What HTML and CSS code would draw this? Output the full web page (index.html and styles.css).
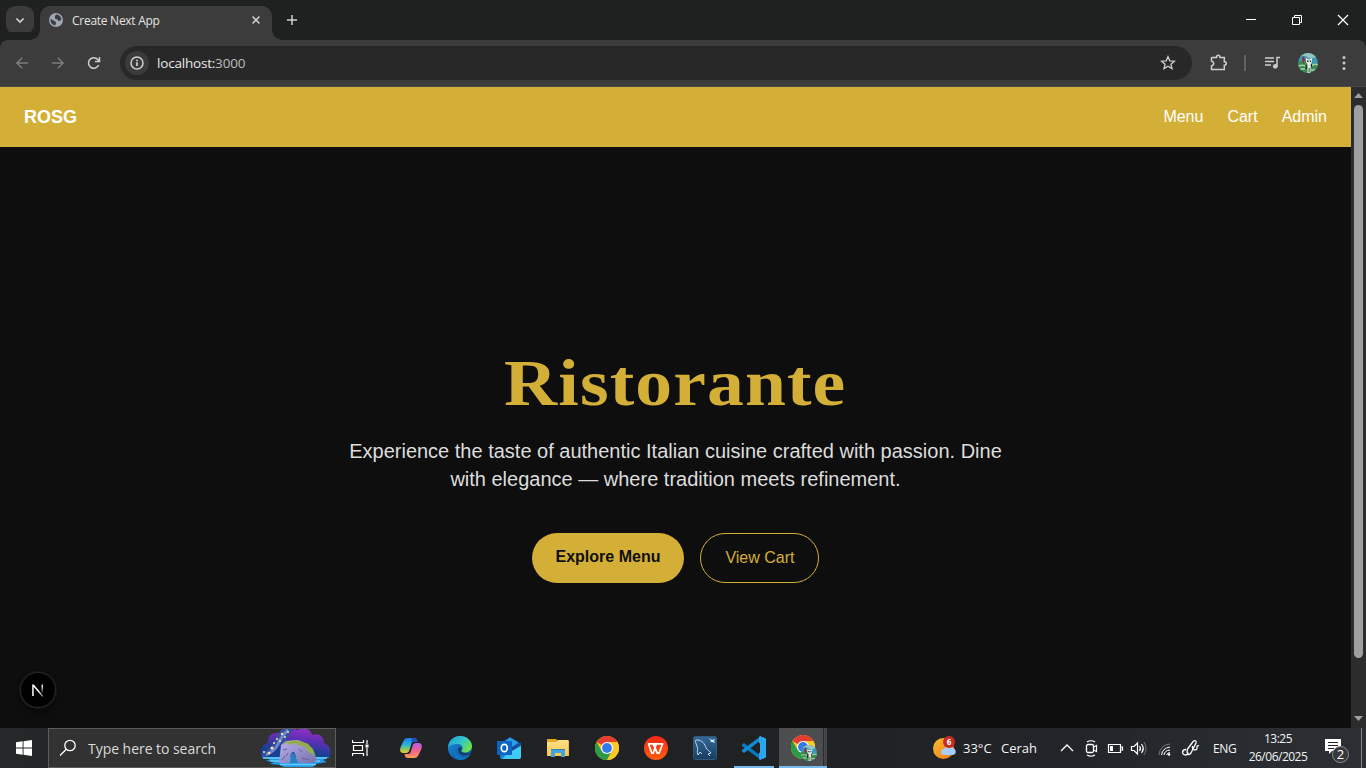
FILE: index.html
```html
<!DOCTYPE html>
<html lang="en">
<head>
<meta charset="utf-8">
<title>Create Next App</title>
<link rel="stylesheet" href="styles.css">
</head>
<body>
<svg class="defs" width="0" height="0">
  <defs>
    <linearGradient id="sky" x1=".8" y1="0" x2=".5" y2="1"><stop offset="0" stop-color="#9a2fc9"/><stop offset=".4" stop-color="#5f2fb4"/><stop offset=".8" stop-color="#173f92"/></linearGradient>
    <linearGradient id="rock" x1="0" y1="0" x2="1" y2="1"><stop offset="0" stop-color="#b9b1ee"/><stop offset="1" stop-color="#7770ab"/></linearGradient>
    <linearGradient id="cpA" x1="0" y1="0" x2="0" y2="1"><stop offset="0" stop-color="#1c7ce8"/><stop offset=".45" stop-color="#25b5d8"/><stop offset=".75" stop-color="#8bc860"/><stop offset="1" stop-color="#f5c62c"/></linearGradient>
    <linearGradient id="cpB" x1="0" y1="0" x2="0" y2="1"><stop offset="0" stop-color="#b45be8"/><stop offset=".5" stop-color="#f0628f"/><stop offset="1" stop-color="#fb9b58"/></linearGradient>
    <linearGradient id="edA" x1="0" y1="0" x2="1" y2=".5"><stop offset="0" stop-color="#1d9de0"/><stop offset=".6" stop-color="#35c6c9"/><stop offset="1" stop-color="#6be04c"/></linearGradient>
    <linearGradient id="edB" x1="0" y1="0" x2="1" y2="1"><stop offset="0" stop-color="#1a8ee0"/><stop offset="1" stop-color="#0d4a94"/></linearGradient>
    <linearGradient id="folder" x1="0" y1="0" x2="0" y2="1"><stop offset="0" stop-color="#ffe08a"/><stop offset="1" stop-color="#f8c748"/></linearGradient>
    <linearGradient id="wps" x1="0" y1="0" x2="0" y2="1"><stop offset="0" stop-color="#f9261a"/><stop offset="1" stop-color="#ff5f0e"/></linearGradient>
    <linearGradient id="sql" x1="0" y1="0" x2="0" y2="1"><stop offset="0" stop-color="#34689a"/><stop offset="1" stop-color="#173e60"/></linearGradient>
    <linearGradient id="sun" x1="0" y1="0" x2="1" y2="1"><stop offset="0" stop-color="#fbbd2f"/><stop offset="1" stop-color="#ed7a17"/></linearGradient>
    <linearGradient id="nx" x1="0" y1="0" x2="1" y2="1"><stop offset=".55" stop-color="#fff"/><stop offset="1" stop-color="#fff" stop-opacity=".25"/></linearGradient>
    <linearGradient id="nv" gradientUnits="userSpaceOnUse" x1="0" y1="1" x2="0" y2="10"><stop offset=".3" stop-color="#ddd"/><stop offset="1" stop-color="#ddd" stop-opacity=".1"/></linearGradient>
    <clipPath id="round"><circle cx="10" cy="10" r="10"/></clipPath>
    <g id="avatar" clip-path="url(#round)">
      <rect width="20" height="20" fill="#3d97b4"/>
      <path d="M0 5Q5 1 9 4T20 3V0H0z" fill="#91c5c4"/>
      <path d="M0 9Q6 6 10 11T20 9V20H0z" fill="#3b8a50"/>
      <path d="M0 13Q6 11 8 14M12 14q4-4 8-2M2 16h5M13 17h5" stroke="#a5d3a0" stroke-width="1.500" fill="none"/>
      <path d="M4 5l2-2 1 5-2 3z" fill="#922b37"/>
      <path d="M8 5l3 1.500L14 5v4l-1.500 2.500V20h-3v-8.500L8 9z" fill="#e2e6df"/>
      <path d="M9 7.500h1.500V9H9zM11.800 7.500h1.300V9h-1.300zM7.500 12h1.500v4H7.500zM10.700 15h.8v4h-.8zM13 11h1v3h-1z" fill="#222a30"/>
    </g>
    <g id="chrome">
      <circle cx="12" cy="12" r="12" fill="#fbc926"/>
      <path d="M12 12L1.600 6A12 12 0 0 1 22.400 6z" fill="#e43d32"/>
      <path d="M1.600 6A12 12 0 0 0 12 24L17.200 15 12 12 6.800 15z" fill="#2c9b48"/>
      <path d="M12 6H22.400A12 12 0 0 1 12 24l5.200-9z" fill="#fbc926"/>
      <circle cx="12" cy="12" r="6" fill="#fff"/><circle cx="12" cy="12" r="4.900" fill="#3079ed"/>
    </g>
  </defs>
</svg>

<header class="tabstrip">
  <button class="tab-search"><svg width="10" height="7" viewBox="0 0 10 7"><path d="M1.400 1.500L5 5l3.600-3.500" class="s-light w17"/></svg></button>
  <div class="tab">
    <svg class="globe" width="14" height="14" viewBox="0 0 14 14"><circle cx="7" cy="7" r="7" fill="#a0a7b3"/><path d="M1.500 6Q4 6.500 5 8q2 0 2 1.500T6 12.500Q1 11 1.500 6zM7 1.500q4 0 5.500 4.500-.5 2-3 2-.5-2-3-2-1.500-2 .5-4.500z" fill="#3b3d3f"/></svg>
    <span class="tab-title">Create Next App</span>
    <svg class="tab-close" width="8" height="8" viewBox="0 0 8 8"><path d="M.6.6l6.800 6.800M7.400.6L.6 7.400" class="s-light w15"/></svg>
  </div>
  <svg class="new-tab" width="12" height="12" viewBox="0 0 12 12"><path d="M6 1v10M1 6h10" class="s-light w15"/></svg>
  <div class="win-controls">
    <svg width="46" height="40" viewBox="0 0 46 40"><path d="M18 19.500h10" class="s-white w1"/></svg>
    <svg width="46" height="40" viewBox="0 0 46 40"><path d="M18.500 17.500h7v7h-7zM20.500 17.500v-2h7v7h-2" class="s-white w1"/></svg>
    <svg width="46" height="40" viewBox="0 0 46 40"><path d="M18 15l10 10M28 15l-10 10" class="s-white w12"/></svg>
  </div>
</header>

<div class="toolbar">
  <div class="nav-btns">
    <svg width="36" height="36" viewBox="0 0 36 36"><path d="M28 18H17M22.200 12.700L16.900 18l5.300 5.300" class="s-dim w15"/></svg>
    <svg width="36" height="36" viewBox="0 0 36 36"><path d="M16 18h11M21.800 12.700l5.300 5.300-5.300 5.300" class="s-dim w15"/></svg>
    <svg width="36" height="36" viewBox="0 0 36 36"><path d="M26.700 20A5.300 5.300 0 1 1 25.800 14.500L27.300 16M27.500 12v4.500H23" class="s-light w15"/></svg>
  </div>
  <div class="omnibox">
    <span class="site-info"><svg width="14" height="14" viewBox="0 0 14 14"><circle cx="7" cy="7" r="6" class="s-light w15"/><path d="M6.200 6.200h1.600V10H6.200zM6.200 3.700h1.600v1.500H6.200z" fill="#ddd"/></svg></span>
    <span class="url">localhost:<span class="port">3000</span></span>
    <svg class="star" width="16" height="16" viewBox="0 0 16 16"><path d="M8 1.700l1.800 4.100 4.600.4-3.500 3 1.100 4.400L8 11.200l-4 2.400 1.100-4.400-3.500-3 4.600-.4z" class="s-light w13"/></svg>
  </div>
  <div class="actions">
    <svg width="53" height="36" viewBox="0 0 53 36"><path d="M20 12.500h4.500c0-3 3.500-3 3.500 0h4.300v4.300c2.700 0 2.700 3.400 0 3.400v4.300H19.500V21c3-1 3-4 0-5v-3z" class="s-light w15"/></svg>
    <i class="divider"></i>
    <svg class="media" width="16" height="14" viewBox="0 0 16 14"><path d="M0 2h9M0 5.500h9M0 9h6M12 10.500V1.500h3" class="s-light w15"/><circle cx="10.300" cy="10.300" r="2.400" fill="#c7c7c7"/></svg>
    <svg class="profile" width="20" height="20" viewBox="0 0 20 20"><use href="#avatar"/></svg>
    <svg class="kebab" width="4" height="16" viewBox="0 0 4 16" fill="#c7c7c7"><circle cx="2" cy="2.500" r="1.500"/><circle cx="2" cy="8" r="1.500"/><circle cx="2" cy="13.500" r="1.500"/></svg>
  </div>
</div>

<div class="viewport">
  <div class="page">
    <nav class="navbar">
      <strong class="brand">ROSG</strong>
      <div class="links"><a>Menu</a><a>Cart</a><a>Admin</a></div>
    </nav>
    <main class="hero">
      <h1>Ristorante</h1>
      <p>Experience the taste of authentic Italian cuisine crafted with passion. Dine with elegance — where tradition meets refinement.</p>
      <div class="cta"><a class="btn solid">Explore Menu</a><a class="btn outline">View Cart</a></div>
    </main>
    <div class="next-badge"><svg width="14" height="14" viewBox="0 0 14 14"><path d="M1.200 13V1.500h1.600L12.500 13l-1.200 1L2.700 3.800V13z" fill="url(#nx)"/><path d="M10.500 1.500H12V10h-1.500z" fill="url(#nv)"/></svg></div>
  </div>
  <div class="scrollbar">
    <svg width="9" height="5" viewBox="0 0 9 5"><path d="M0 5L4.500 0 9 5z" fill="#9f9f9f"/></svg>
    <i class="thumb"></i>
    <svg width="9" height="5" viewBox="0 0 9 5"><path d="M0 0l4.500 5L9 0z" fill="#9f9f9f"/></svg>
  </div>
</div>

<footer class="taskbar">
  <div class="start"><svg width="16" height="16" viewBox="0 0 16 16" fill="#fff"><path d="M0 2.200L6.600 1.300V7.500H0zM7.500 1.200L16 0v7.500H7.500zM0 8.400h6.600v6.300L0 13.800zM7.500 8.400H16V16l-8.500-1.200z"/></svg></div>
  <div class="search">
    <svg class="lens" width="18" height="18" viewBox="0 0 18 18"><circle cx="11" cy="6.500" r="5.200" class="s-white w13"/><path d="M7.300 10.200L1 16.500" class="s-white w13"/></svg>
    <span>Type here to search</span>
    <svg class="scene" width="72" height="38" viewBox="0 0 72 38">
      <path d="M2 28C-2 21 3 15 8 14 7 4 17 2 21 5 24-1 33-2 37 1c7-3 14-1 15 5 8-3 12 3 12 8 8 3 8 12 4 15z" fill="url(#sky)"/>
      <path d="M22 0h12c-6 6-6 12-12 15S14 25 3 29c-5-5 5-7 8-11S16 6 22 0z" fill="#35509f"/>
      <path d="M28 1Q21 8 18 15T6 26" fill="none" stroke="#6f86cc" stroke-width="3"/>
      <g fill="#ffe1b0"><circle cx="22" cy="5" r="1.200"/><circle cx="28" cy="3" r="1"/><circle cx="17" cy="10" r="1"/><circle cx="12" cy="19" r="1.600"/><circle cx="14" cy="14" r="1"/><circle cx="20" cy="12" r="1"/><circle cx="4" cy="23" r="1"/><circle cx="9" cy="24" r="1.300"/><circle cx="25" cy="8" r="1"/></g>
      <path d="M1 28h69l-7 3 4 2-11 2-3 3H24l-4-2-10-1 4-2-8-1 4-2z" fill="#219be6"/>
      <path d="M3 29h64M10 32h50M20 35.500h36" stroke="#6acbf6" stroke-width="1.500"/>
      <path d="M19 34l2-18 5-4 12-1 10 4 9 16-4 3H38l-3-9c-1-3-3-2-4 0l-2 9z" fill="url(#rock)"/>
      <path d="M30 34l1-8c1-3 3-2 4 0l3 8z" fill="#2e7cc4"/>
      <path d="M22 16l5-4 2 1 3-2 8 1 8 3 5 5 3 8-5-4-3-1-4-6-5 0-3-3-5 2-4-2z" fill="#93ad4c"/>
      <path d="M23 21l4-1M26 27l2-3M42 23l-3-3M42 29l7 2M22 31l3-4" stroke="#655e9c" fill="none"/>
    </svg>
  </div>
  <div class="apps">
    <div class="app taskview"><svg width="17" height="16" viewBox="0 0 17 16"><path d="M.5 0v2.500h11V0M1.500 5.500h9v5h-9zM.5 16v-2.500h11V16M15 0v4M15 8v8" class="s-white w12"/><path d="M13.500 4.500h3v3h-3z" fill="#fff"/></svg></div>
    <div class="app"><svg width="24" height="24" viewBox="0 0 24 24"><path d="M8.500 2h6.300C17 2 18 3 18.500 6H15c-2 0-2.500 1-3 3l-1.500 5c-.6 2-1.500 3-3.500 3H4.500C0 17 1 13 2 10l2.500-5c1-2 2-3 4-3z" fill="url(#cpA)"/><path d="M15.500 22H9.200C7 22 6 21 5.500 18H9c2 0 2.500-1 3-3l1.500-5c.6-2 1.500-3 3.500-3h2.500C24 7 23 11 22 14l-2.500 5c-1 2-2 3-4 3z" fill="url(#cpB)"/><path d="M12.500 2h3c2 0 2.500 2 3 4H15c-1 0-2 0-2.500 2z" fill="#2450be"/></svg></div>
    <div class="app"><svg width="24" height="24" viewBox="0 0 24 24"><circle cx="12" cy="12" r="12" fill="url(#edB)"/><path d="M0 11C1 4 6 0 12 0c7 0 12 5 12 10 0 4-3 6.500-7 6.500-3 0-4-1-3-2.500 2-3-1-6-4-6-5 0-8 1-10 3z" fill="url(#edA)"/><path d="M9 10c-3 5 1 11 6 11 3 0 5-1 7-2-2 3-6 5-10 5-5-1-9-9-3-14z" fill="#1473be"/><path d="M10 13c0 4 3 6 6 6 3 .5 5-.5 7-1.500-1-.5-3 .5-7-.5-3-.5-4-2-2-5-2-1-4-1-4 1z" fill="#173d5f"/></svg></div>
    <div class="app"><svg width="24" height="24" viewBox="0 0 24 24"><path d="M3 8l10-7 11 7v13q0 2-2 2H5q-2 0-2-2z" fill="#1582d5"/><path d="M5 7l8-5 8 4-5 5H7z" fill="#2b9ee5"/><path d="M13 12l11-6v5l-9 5z" fill="#124b9a"/><path d="M24 9.500V21q0 2-2 2H5l4-4 6-4z" fill="#3fcbf4"/><rect y="5" width="15" height="14" rx="1" fill="#0c65c1"/><ellipse cx="7.300" cy="12" rx="3" ry="3.700" fill="none" stroke="#fff" stroke-width="1.700"/></svg></div>
    <div class="app"><svg width="22" height="20" viewBox="0 0 22 20"><path d="M0 3V1h9l2 2h11v15H0z" fill="#eaa822"/><path d="M0 4h9l2-2h10.500v16H0z" fill="url(#folder)"/><path d="M4 19v-8h14v8h-4v-4H8v4z" fill="#48a2dd"/><path d="M4 11h14v1H4z" fill="#2d83bf"/></svg></div>
    <div class="app"><svg width="24" height="24" viewBox="0 0 24 24"><use href="#chrome"/></svg></div>
    <div class="app"><svg width="24" height="24" viewBox="0 0 24 24"><circle cx="12" cy="12" r="12" fill="url(#wps)"/><path d="M4.500 7.800H18.700L15 17.200h-1.800L11 11.500 9.300 17.200H7.800zM9 8l2 3.500L12.500 8" fill="none" stroke="#fff" stroke-width="1.700" stroke-linejoin="round"/></svg></div>
    <div class="app"><svg width="24" height="24" viewBox="0 0 24 24"><rect x=".5" y=".5" width="23" height="23" rx="2" fill="url(#sql)" stroke="#305b7e"/><path d="M5 19c-2-4 1-5-1-9-1-3-3-6 0-6 5 0 8 4 9 8 1 2 4 3 5 5l-3 1 2 2M5 19l2-3 2 2" fill="none" stroke="#c3d8e7"/><path d="M16 2l3 2 3-1-1 2 1 2-3-1-2 0 1-1z" fill="#dbe7ee"/></svg></div>
    <div class="app running"><svg width="24" height="24" viewBox="0 0 24 24"><path d="M0 8.500L2 7l17 13v4L0 10z" fill="#087abf"/><path d="M0 15.500L2 17 19 4V0L0 14z" fill="#168bd3"/><path d="M18 0l6 2.500v19L18 24l-1-1V1z" fill="#2da5ee"/><path d="M18 7v10l-7-5z" fill="#202324"/></svg></div>
    <div class="app active"><svg width="26" height="26" viewBox="0 0 26 26"><use href="#chrome"/><g transform="translate(10 10) scale(.8)"><use href="#avatar"/></g></svg></div>
  </div>
  <div class="tray">
    <div class="weather">
      <svg width="24" height="24" viewBox="0 0 24 24"><circle cx="10.500" cy="12.500" r="10.500" fill="url(#sun)"/><path d="M11 19a3 3 0 0 1 0-6 4 4 0 0 1 7-1 3.500 3.500 0 0 1 2 7z" fill="#a9cdfb"/><circle cx="16" cy="6" r="6" fill="#c92a22"/><text x="16" y="9" class="count">6</text></svg>
      <span class="temp">33°C</span><span class="cond">Cerah</span>
    </div>
    <svg width="24" height="24" viewBox="0 0 24 24"><path d="M6 15l6-6 6 6" class="s-white w13"/></svg>
    <svg width="24" height="24" viewBox="0 0 24 24"><rect x="7.500" y="8.500" width="7" height="8" rx="1.500" class="s-white w13"/><path d="M14.500 11l3-1.500v6l-3-1.500M8 6q4-2.500 8 0M8 19q4 2.500 8 0" class="s-white w12"/></svg>
    <svg width="24" height="24" viewBox="0 0 24 24"><path d="M5.500 8.500h12v8h-12zM18 11h1.500v3H18" class="s-white w12"/><path d="M7 10h3v5H7z" fill="#fff"/></svg>
    <svg width="24" height="24" viewBox="0 0 24 24"><path d="M4.500 10.500H7L10.500 7v11L7 14.500H4.500z" class="s-white w12"/><path d="M12.500 10q2 2.500 0 5M14.500 8q3.500 4.500 0 9" class="s-white w12"/><path d="M17 6q4 6.500 0 13" stroke="#777" fill="none"/></svg>
    <svg class="wifi" width="26" height="24" viewBox="0 0 26 24"><path d="M8 19Q9 9 19 8" stroke="#777" fill="none"/><path d="M10.500 19Q11.500 12 19 11M13 19q.5-4.500 6-5M15.500 19q.5-2 3.500-2.500" class="s-white w1"/><circle cx="18" cy="18.500" r="1.300" fill="#fff"/></svg>
    <svg width="26" height="24" viewBox="0 0 26 24"><path d="M9 13.500c-4.500 0-4.500 5.500-.5 5.500 2 0 2.500-1 2.500-2.500M10.500 13l6-8c2-1 3 0 2.500 2L14 17c-2 2.500-5 2-3.500-4zM15.500 10c-1 5 5 5 4.500 1.500-.5-2 1-2 2-1.500" class="s-white w13"/></svg>
    <span class="lang">ENG</span>
    <div class="clock"><span class="time">13:25</span><span class="date">26/06/2025</span></div>
    <div class="notes"><svg width="26" height="26" viewBox="0 0 26 26"><path d="M1 1h16v12H8l-3 3v-3H1z" fill="#fff"/><path d="M4 4.500h10M4 7.500h10M4 10.500h6" stroke="#26282b"/><circle cx="16.500" cy="16.500" r="8" fill="#36383b" stroke="#8d8d8d"/><text x="16.500" y="21" class="badge-count">2</text></svg></div>
    <i class="peek"></i>
  </div>
</footer>
</body>
</html>
```
FILE: styles.css
```css
* { box-sizing: border-box; }
body { margin: 0; width: 1366px; height: 768px; overflow: hidden; display: flex; flex-direction: column; background: #0e0e0e; font-family: "Liberation Sans", Arial, sans-serif; }
svg { display: block; flex: none; }
.defs { position: absolute; }
.s-light { fill: none; stroke: #d0d0d0; }
.s-dim { fill: none; stroke: #7b7b7b; }
.s-white { fill: none; stroke: #fff; }
.w1 { stroke-width: 1; } .w12 { stroke-width: 1.2; } .w13 { stroke-width: 1.3; } .w15 { stroke-width: 1.5; } .w17 { stroke-width: 1.7; }

/* Browser chrome */
.tabstrip { height: 40px; flex: none; display: flex; background: #1f2120; padding-left: 6px; }
.tab-search { width: 28px; height: 28px; margin: 6px 6px 0 0; padding: 0; border: 0; border-radius: 9px; background: #3b3b3b; display: grid; place-items: center; }
.tab { position: relative; z-index: 1; width: 232px; height: 34px; margin-top: 6px; border-radius: 10px 10px 0 0; background: #3c3c3c; display: flex; align-items: center; padding: 0 12px 6px 9px; }
.tab::before, .tab::after { content: ""; position: absolute; bottom: 0; width: 10px; height: 10px; }
.tab::before { left: -10px; background: radial-gradient(circle at 0 0, transparent 9.5px, #3c3c3c 10px); }
.tab::after { right: -10px; background: radial-gradient(circle at 100% 0, transparent 9.5px, #3c3c3c 10px); }
.tab-title { margin-left: 9px; padding-top: 2px; flex: 1; font: 12px/16px "Open Sans", sans-serif; letter-spacing: -.27px; color: #e3e3e3; }
.new-tab { margin: 14px 0 0 14px; }
.win-controls { margin-left: auto; display: flex; }
.toolbar { position: relative; height: 47px; flex: none; display: flex; align-items: center; background: #3c3c3c; border-bottom: 1px solid #4a4a48; border-radius: 8px 8px 0 0; box-shadow: 0 -8px 0 0 #1f2120; }
.nav-btns { display: flex; width: 120px; }
.omnibox { width: 1072px; height: 34px; border-radius: 17px; background: #282828; display: flex; align-items: center; padding: 0 16px 0 5px; }
.site-info { width: 24px; height: 24px; border-radius: 50%; background: #3b3b3b; display: grid; place-items: center; }
.url { margin-left: 8px; flex: 1; font: 13.5px/20px "Open Sans", sans-serif; letter-spacing: -.2px; color: #e8e8e8; }
.port { color: #bcbcbc; }
.actions { display: flex; align-items: center; }
.divider { width: 2px; height: 16px; margin-left: -1px; background: #616161; }
.media { margin-left: 19px; }
.profile { margin-left: 17px; }
.kebab { margin-left: 24px; }

/* Restaurant landing page */
.viewport { height: 641px; flex: none; display: flex; }
.page { position: relative; width: 1351px; background: #0e0e0e; display: flex; flex-direction: column; }
.navbar { height: 60px; flex: none; padding: 0 24px; background: #d4af37; color: #fff; display: flex; align-items: center; justify-content: space-between; }
.brand { font-size: 18px; line-height: 28px; }
.links { display: flex; gap: 24px; font-size: 16px; line-height: 24px; }
.hero { display: flex; flex-direction: column; align-items: center; padding-top: 206px; text-align: center; }
h1 { margin: 0; font: bold 65px/60px "Liberation Serif", serif; letter-spacing: 1px; color: #d4af37; transform: scaleX(1.132); }
.hero p { margin: 24px 0 40px; width: 672px; font-size: 20px; line-height: 28px; color: #ddd; }
.cta { display: flex; gap: 16px; }
.btn { height: 50px; border-radius: 25px; padding: 0 24px; font-size: 16px; line-height: 48px; }
.solid { background: #d4af37; color: #0e0e0e; font-weight: bold; }
.outline { border: 1px solid #d4af37; color: #d4af37; }
.next-badge { position: absolute; left: 20px; bottom: 20px; width: 36px; height: 36px; border-radius: 50%; background: #000; border: 1px solid #282828; box-shadow: 0 0 0 1px #171717, 0 5px 8px #0006; display: grid; place-items: center; }
.scrollbar { width: 15px; background: #2c2c2c; display: flex; flex-direction: column; align-items: center; padding: 6px 0 7px; }
.thumb { width: 9px; height: 553px; border-radius: 5px; margin: 7px 0 auto; background: #9f9f9f; }

/* Windows taskbar */
.taskbar { height: 40px; flex: none; display: flex; background: linear-gradient(90deg, #252829 0, #202223 25%, #1f2123 60%, #23252a 80%, #2c3034 100%); color: #f4f4f4; font-family: "Open Sans", sans-serif; }
.start { width: 48px; display: grid; place-items: center; }
.search { width: 288px; border: 1px solid #5c5c5c; background: #323232; display: flex; align-items: center; padding-left: 10px; }
.search span { margin-left: 11px; width: 129px; font-size: 14px; letter-spacing: -.04px; color: #dadada; white-space: nowrap; }
.scene { margin-left: 43px; }
.apps { display: flex; }
.app { width: 49px; display: grid; place-items: center; }
.taskview { width: 50px; padding-right: 1px; }
.running { background: linear-gradient(#76b9ed, #76b9ed) 50% 100% / 40px 2px no-repeat; }
.active { width: 48px; margin-left: 1px; border-bottom: 2px solid #76b9ed; padding: 2px 0 0 2px; background: linear-gradient(90deg, #4b4d4f 44px, #292b2d 44px 45px, #424548 45px); }
.tray { margin-left: auto; display: flex; align-items: center; }
.weather { width: 122px; display: flex; align-items: center; font-size: 13px; white-space: nowrap; }
.temp { width: 32px; margin-left: 6px; }
.cond { margin-left: 6px; }
.count { font: bold 8px "Open Sans", sans-serif; fill: #fff; text-anchor: middle; }
.lang { width: 43px; padding-left: 10px; font-size: 12px; letter-spacing: -.4px; }
.clock { width: 64px; display: flex; flex-direction: column; align-items: center; font-size: 12px; line-height: 18px; letter-spacing: -.5px; }
.notes { width: 51px; padding: 6px 0 0 14px; }
.badge-count { font: 13px "Open Sans", sans-serif; fill: #fff; text-anchor: middle; }
.peek { width: 5px; height: 40px; border-left: 1px solid #85888a; }
```
